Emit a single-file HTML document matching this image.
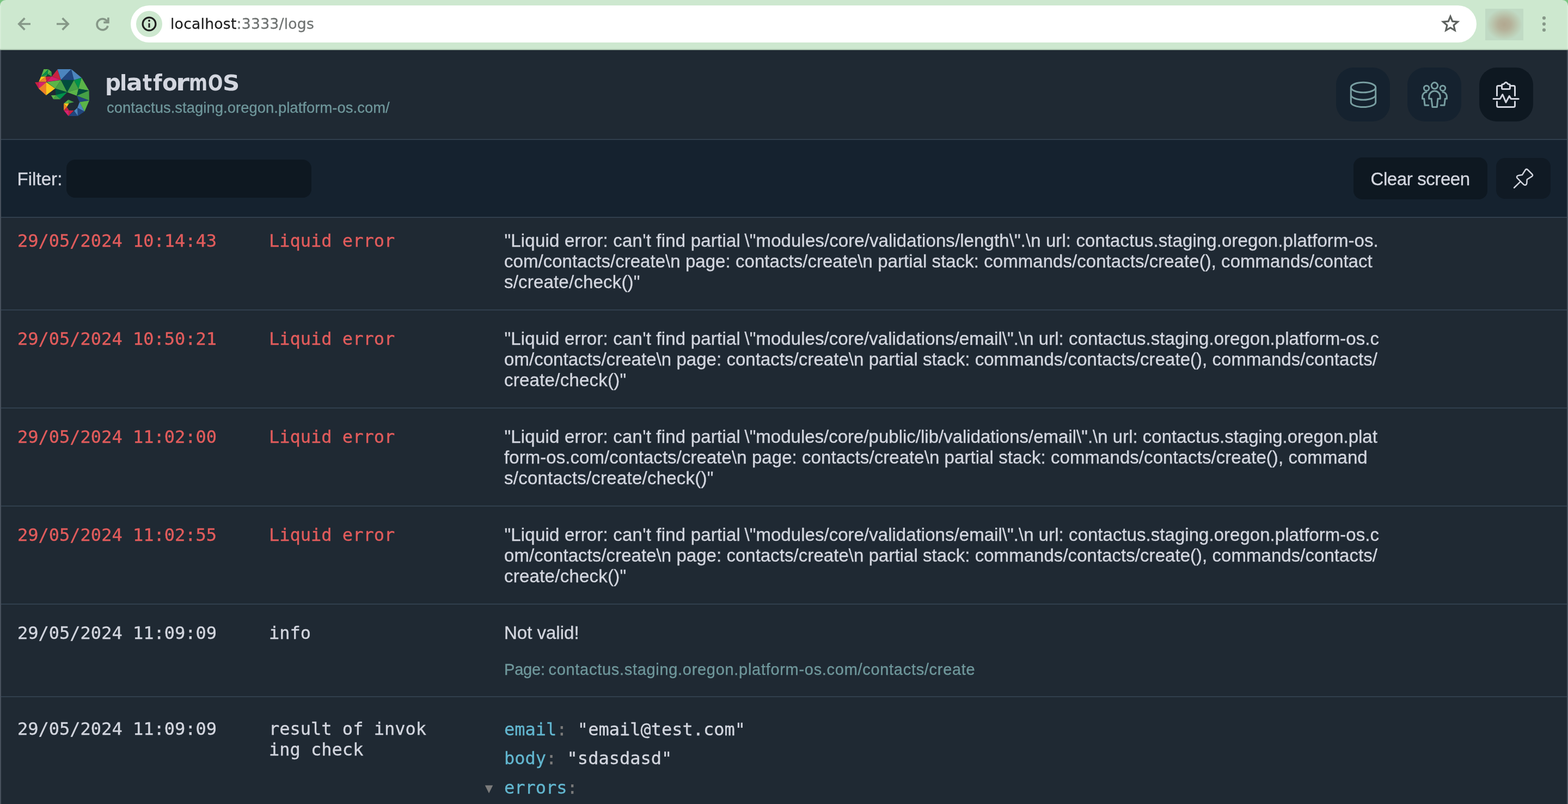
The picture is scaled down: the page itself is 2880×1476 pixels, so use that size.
<!DOCTYPE html>
<html lang="en"><head><meta charset="utf-8"><title>platformOS - Logs</title>
<style>
*{margin:0;padding:0;box-sizing:border-box}
html,body{width:2880px;height:1476px;overflow:hidden;background:#1f2933}
body{position:relative;font-family:"Liberation Sans", Arial, sans-serif;font-size:32px;color:#d3d6df}
#root{position:absolute;left:0;top:0;width:2880px;height:1476px;overflow:hidden;will-change:transform}
.t{position:absolute;white-space:pre;line-height:38px;height:38px;-webkit-text-stroke:.35px currentColor}
.m{font-size:33px}
.mono{font-family:"DejaVu Sans Mono", "Liberation Mono", monospace;font-size:32px}
.red{color:#e25c5c}
.teal{color:#6f979b}
.key{color:#62b6cf}
.dim{color:#7b7b7b}
.tri{font-family:"DejaVu Sans",sans-serif;font-size:19px;-webkit-text-stroke:0}
.hr{position:absolute;left:0;width:2880px;height:2px;background:#313f4d}
#chrome{position:absolute;left:0;top:0;width:2880px;height:92px;background:#cde8cf;border-bottom:2px solid #a9c2ac;overflow:hidden}
#chrome svg{position:absolute;left:0;top:0}
#pill{position:absolute;left:240px;top:10px;width:2472px;height:68px;border-radius:34px;background:#fff}
#info{position:absolute;left:250px;top:20px;width:48px;height:48px;border-radius:24px;background:#cde8cf}
#url{position:absolute;left:313px;top:24px;font-family:"DejaVu Sans","Liberation Sans",sans-serif;font-size:26.7px;line-height:40px;color:#6f7372;white-space:pre;letter-spacing:.2px;-webkit-text-stroke:.3px currentColor}
#url span{color:#1f1f1f}
#avatar{position:absolute;left:2728px;top:16px;width:70px;height:58px;background:radial-gradient(ellipse 33px 29px at 50% 50%,#b2a890 0%,#b5b199 35%,#bccbb3 75%,#c0dac4 100%)}
header{position:absolute;left:0;top:92px;width:2880px;height:163px;background:#1f2933}
#logo{position:absolute;left:56px;top:118px;width:120px;height:102px}
#brand{position:absolute;left:0;top:128.2px;height:48px;width:600px;font-family:"DejaVu Sans","Liberation Sans",sans-serif;font-weight:bold;font-size:42px;line-height:48px;white-space:pre;color:#d3d6df}
#brand span{position:absolute;top:0;transform-origin:0 38px}
#inst{position:absolute;left:196px;top:181.5px;font-size:27.4px;line-height:32px;white-space:pre;color:#6f979b;letter-spacing:.05px;-webkit-text-stroke:.3px #6f979b}
#filterbar{position:absolute;left:0;top:257px;width:2880px;height:141px;background:#15222f}
.hbtn{position:absolute;top:124px;width:99px;height:99px;border-radius:32px;background:#15222f}
.hbtn.on{background:#0e1821}
.hbtn svg{position:absolute;left:26px;top:26px;width:48px;height:48px;overflow:visible;fill:none;stroke:#789ea1;stroke-width:3;stroke-linecap:round;stroke-linejoin:round}
.hbtn.on svg{stroke:#d3d6df}
.fbtn{position:absolute;border-radius:16px;background:#0e1821}
#edgeL,#edgeR{position:absolute;top:92px;width:2px;height:1384px;background:#47505c}
#edgeL{left:0}#edgeR{left:2878px}
.cstrip{position:absolute;top:0;width:2px;height:90px;background:#d7edd8}
.corner{position:absolute;top:0;width:10px;height:10px}
</style></head>
<body>
<div id="root">
<div id="chrome"><div id="pill"></div><div id="info"></div><div id="avatar"></div><svg width="2880" height="92" viewBox="0 0 2880 92" fill="none" stroke="#869888" stroke-width="3.7" stroke-linecap="butt" stroke-linejoin="miter">
<path d="M56 44H36M45.4 33.4L34.8 44L45.4 54.6"/>
<path d="M104 44H124M114.600 33.4L125.200 44L114.600 54.6"/>
<path d="M197.5 40.7A10.1 10.1 0 1 0 198 47.4"/>
<path d="M198.9 32.3V41.2H190.3"/>
<circle cx="274" cy="44" r="11.9" stroke="#1f1f1f" stroke-width="3.2"/>
<path d="M274 42.6V50.6" stroke="#1f1f1f" stroke-width="3"/>
<circle cx="274" cy="38" r="1.9" fill="#1f1f1f" stroke="none"/>
<path d="M2664 30.2l3.75 8.95 9.7.85-7.35 6.35 2.2 9.45-8.3-5-8.3 5 2.2-9.45-7.35-6.35 9.7-.85z" stroke="#5e625f" stroke-width="3.2" stroke-linejoin="miter"/>
<g fill="#869888" stroke="none"><circle cx="2836" cy="33" r="3.1"/><circle cx="2836" cy="44" r="3.1"/><circle cx="2836" cy="55" r="3.1"/></g>
</svg><div id="url"><span>localhost</span>:3333/logs</div></div>
<header></header>
<svg id="logo" viewBox="0 0 1553 1320" preserveAspectRatio="none"><polygon fill="#5bb548" points="315,118 425,118 250,295"/><polygon fill="#00924a" points="425,118 410,235 250,295"/><polygon fill="#45a046" points="250,295 410,235 370,290"/><polygon fill="#004d3d" points="410,235 505,285 370,290"/><polygon fill="#5bb548" points="425,118 500,180 410,235"/><polygon fill="#45a046" points="500,180 505,285 410,235"/><polygon fill="#fcc81c" points="250,295 362,295 195,420"/><polygon fill="#ec8126" points="362,295 380,420 195,420"/><polygon fill="#c8203f" points="362,295 505,288 380,418"/><polygon fill="#d6206e" points="505,288 722,372 380,418"/><polygon fill="#c8233f" points="508,288 640,122 722,372"/><polygon fill="#c8203f" points="105,428 197,425 197,582"/><polygon fill="#d6206e" points="195,425 378,425 195,582"/><polygon fill="#ec8126" points="378,425 372,738 195,580"/><polygon fill="#fcc81c" points="376,425 585,577 370,738"/><polygon fill="#4c85be" points="640,118 970,118 725,372"/><polygon fill="#21467e" points="970,118 1035,376 725,372"/><polygon fill="#4c85be" points="970,118 1215,320 1035,376"/><polygon fill="#5bb548" points="385,420 722,375 590,577"/><polygon fill="#45a046" points="722,375 872,662 590,577"/><polygon fill="#004d3d" points="725,372 1035,376 872,662"/><polygon fill="#45a046" points="1035,376 1142,582 872,662"/><polygon fill="#00924a" points="1035,376 1215,320 1142,582"/><polygon fill="#5bb548" points="1215,320 1392,626 1142,582"/><polygon fill="#5bb548" points="872,662 1142,582 1100,748"/><polygon fill="#004d3d" points="1142,582 1392,626 1100,748"/><polygon fill="#45a046" points="1392,626 1397,862 1100,748"/><polygon fill="#004d3d" points="590,580 872,662 600,732"/><polygon fill="#00924a" points="872,662 710,828 600,732"/><polygon fill="#5bb548" points="490,738 607,735 545,830"/><polygon fill="#45a046" points="607,735 712,830 545,830"/><polygon fill="#21467e" points="1100,750 1397,862 1165,900"/><polygon fill="#5bb548" points="1165,900 1397,862 1285,1122"/><polygon fill="#4c85be" points="1165,900 1285,1122 1115,1035"/><polygon fill="#21467e" points="1115,1035 1285,1122 1125,1228"/><polygon fill="#4c85be" points="1115,1035 1125,1228 1035,1105"/><polygon fill="#21467e" points="1035,1105 1125,1228 900,1230"/><polygon fill="#c8203f" points="1035,1098 900,1230 915,1098"/><polygon fill="#d6206e" points="793,1098 915,1098 900,1230"/><polygon fill="#c8203f" points="793,1097 865,1015 917,1097"/><polygon fill="#ec8126" points="790,932 865,1015 790,1097"/><polygon fill="#fcc81c" points="790,930 915,930 865,1012"/><polygon fill="#5bb548" points="793,927 900,840 915,930"/><polygon fill="#45a046" points="900,840 1035,900 915,930"/></svg>
<div id="brand"><span style="left:192.54px;transform:scale(0.967,1.0)">p</span><span style="left:219.92px;transform:scale(0.916,0.927)">l</span><span style="left:232.47px;transform:scale(1.047,1.0)">a</span><span style="left:262.28px;transform:scale(0.860,0.97)">t</span><span style="left:281.22px;transform:scale(0.912,0.954)">f</span><span style="left:298.15px;transform:scale(0.964,1.0)">o</span><span style="left:322.62px;transform:scale(1.205,1.0)">r</span><span style="left:347.33px;transform:scale(0.779,1.0)">m</span><span style="left:381.89px;transform:scale(0.768,0.914)">O</span><span style="left:408.63px;transform:scale(1.034,0.914)">S</span></div>
<div id="inst">contactus.staging.oregon.platform-os.com/</div>
<div class="hbtn" style="left:2454px"><svg viewBox="0 0 48 48"><ellipse cx="24" cy="10.5" rx="22.7" ry="9.2"/><path d="M1.3 10.5V37.4A22.7 9.2 0 0 0 46.7 37.4V10.5"/><path d="M1.3 24A22.7 9.2 0 0 0 46.7 24"/></svg></div>
<div class="hbtn" style="left:2585px"><svg viewBox="0 0 48 48"><circle cx="24" cy="7.3" r="5.7"/><circle cx="9.07" cy="11.9" r="4.7"/><circle cx="38.93" cy="11.9" r="4.7"/><path d="M13.7 31.2V27.4A10.3 10.3 0 0 1 34.3 27.4V31.2H29.9L28.4 46.4H19.9L18.100 31.2Z"/><path d="M9.07 18.9A7.5 8.5 0 0 0 1.6 27.4V31.2H4.7L6 43.3H12.7"/><path d="M38.93 18.9A7.5 8.5 0 0 1 46.4 27.4V31.2H43.3L42 43.3H35.3"/></svg></div>
<div class="hbtn on" style="left:2717px"><svg viewBox="0 0 48 48"><path d="M14 7.5H9A2.5 2.5 0 0 0 6.5 10V25.5"/><path d="M32 7.5H37A2.5 2.5 0 0 1 39.5 10V25.5"/><path d="M6.5 36.6V43.9A2.500 2.500 0 0 0 9 46.4H37A2.500 2.500 0 0 0 39.5 43.9V36.6"/><path d="M15.5 11.9V6.5Q15.5 5 17 4.800L18.900 4.400L21.500 1.900Q23 .6 24.500 1.900L27.100 4.400L29 4.800Q30.400 5 30.400 6.500V11.900Q30.400 13.400 28.900 13.400H17Q15.500 13.400 15.500 11.900Z"/><path d="M0 31.500H12.200L16.800 23.500L23 37.900L29.200 26.300L32.300 31.500H46.200"/></svg></div>
<div class="hr" style="top:255px"></div>
<div id="filterbar"></div>
<div class="t m" style="left:32px;top:310px;left:31.5px;letter-spacing:.05px">Filter:</div>
<div class="fbtn" style="left:122px;top:293px;width:450px;height:70px"></div>
<div class="fbtn" style="left:2486px;top:289px;width:246px;height:77px"></div>
<div class="t m" style="left:2517.5px;top:310px;letter-spacing:-.4px">Clear screen</div>
<div class="fbtn" style="left:2748px;top:290px;width:100px;height:75px;background:#101a24"><svg viewBox="0 0 100 75" style="position:absolute;left:0;top:0;width:100px;height:75px;fill:none;stroke:#d3d6df;stroke-width:2.5;stroke-linecap:round;stroke-linejoin:round"><path d="M33 54.750L44.850 43.150"/><path d="M47.900 31.050L54 21.500Q55.900 19.700 57.800 21.500L66.300 30Q68 32 66 33.600L56.700 39.550L56.300 46.500Q55.500 50 52.800 49.850Q51.500 49.700 50.500 48.700L39 37.200Q37.200 35 38.600 33.400Q39.500 32.300 41.500 32Z"/></svg></div>
<div class="hr" style="top:398px"></div>
<div class="hr" style="top:568px"></div>
<div class="hr" style="top:748px"></div>
<div class="hr" style="top:928px"></div>
<div class="hr" style="top:1108px"></div>
<div class="hr" style="top:1278px"></div>
<div class="t mono red" style="left:32px;top:423px;">29/05/2024 10:14:43</div>
<div class="t mono red" style="left:494px;top:423px;">Liquid error</div>
<div class="t m" style="left:926.39px;top:423px;letter-spacing:0.1987px">"Liquid error: can't find partial </div>
<div class="t m" style="left:1367.49px;top:423px;letter-spacing:0.0905px">\"modules/core/validations/length\".\n url: contactus.staging.oregon.platform-os.</div>
<div class="t m" style="left:926px;top:461px;letter-spacing:0.0433px">com/contacts/create\n page: contacts/create\n partial stack: commands/contacts/create(), commands/contact</div>
<div class="t m" style="left:926px;top:499px;letter-spacing:0.1875px">s/create/check()"</div>
<div class="t mono red" style="left:32px;top:603px;">29/05/2024 10:50:21</div>
<div class="t mono red" style="left:494px;top:603px;">Liquid error</div>
<div class="t m" style="left:926.39px;top:603px;letter-spacing:0.1987px">"Liquid error: can't find partial </div>
<div class="t m" style="left:1367.49px;top:603px;letter-spacing:0.0378px">\"modules/core/validations/email\".\n url: contactus.staging.oregon.platform-os.c</div>
<div class="t m" style="left:926px;top:641px;letter-spacing:0.0428px">om/contacts/create\n page: contacts/create\n partial stack: commands/contacts/create(), commands/contacts/</div>
<div class="t m" style="left:926px;top:679px;letter-spacing:0.25px">create/check()"</div>
<div class="t mono red" style="left:32px;top:783px;">29/05/2024 11:02:00</div>
<div class="t mono red" style="left:494px;top:783px;">Liquid error</div>
<div class="t m" style="left:926.39px;top:783px;letter-spacing:0.1987px">"Liquid error: can't find partial </div>
<div class="t m" style="left:1367.49px;top:783px;letter-spacing:-0.0022px">\"modules/core/public/lib/validations/email\".\n url: contactus.staging.oregon.plat</div>
<div class="t m" style="left:926px;top:821px;letter-spacing:0.063px">form-os.com/contacts/create\n page: contacts/create\n partial stack: commands/contacts/create(), command</div>
<div class="t m" style="left:926px;top:859px;letter-spacing:0.24px">s/contacts/create/check()"</div>
<div class="t mono red" style="left:32px;top:963px;">29/05/2024 11:02:55</div>
<div class="t mono red" style="left:494px;top:963px;">Liquid error</div>
<div class="t m" style="left:926.39px;top:963px;letter-spacing:0.1987px">"Liquid error: can't find partial </div>
<div class="t m" style="left:1367.49px;top:963px;letter-spacing:0.0378px">\"modules/core/validations/email\".\n url: contactus.staging.oregon.platform-os.c</div>
<div class="t m" style="left:926px;top:1001px;letter-spacing:0.0428px">om/contacts/create\n page: contacts/create\n partial stack: commands/contacts/create(), commands/contacts/</div>
<div class="t m" style="left:926px;top:1039px;letter-spacing:0.25px">create/check()"</div>
<div class="t mono" style="left:32px;top:1142.7px;">29/05/2024 11:09:09</div>
<div class="t mono" style="left:494px;top:1142.7px;">info</div>
<div class="t m" style="left:926px;top:1142.6px;letter-spacing:0px">Not valid!</div>
<div class="t teal" style="left:926px;top:1210px;font-size:29px;letter-spacing:-.2px">Page: </div>
<div class="t teal" style="left:1007.5px;top:1210px;font-size:29px;letter-spacing:.7px">contactus.staging.oregon.platform-os.com/contacts/create</div>
<div class="t mono" style="left:32px;top:1319.4px;">29/05/2024 11:09:09</div>
<div class="t mono" style="left:494px;top:1319.4px;">result of invok</div>
<div class="t mono" style="left:494px;top:1357.3px;">ing check</div>
<div class="t mono" style="left:926px;top:1319.5px;"><span class="key">email</span><span class="dim">:</span> "email@test.com"</div>
<div class="t mono" style="left:926px;top:1373.4px;"><span class="key">body</span><span class="dim">:</span> "sdasdasd"</div>
<div class="t mono" style="left:926px;top:1427.3px;"><span class="key">errors</span><span class="dim">:</span></div>
<div class="t dim tri" style="left:890.7px;top:1427.5px;">▼</div>
<div id="edgeL"></div><div id="edgeR"></div>
<div class="cstrip" style="left:0"></div><div class="cstrip" style="left:2878px"></div><div class="corner" style="left:0;background:radial-gradient(circle at 100% 100%,transparent 9px,#78c480 10.5px)"></div><div class="corner" style="left:2870px;background:radial-gradient(circle at 0 100%,transparent 9px,#78c480 10.5px)"></div>
</div>
<script>(function(){var w=window.innerWidth||0;if(w>0&&Math.abs(w-2880)>2){document.documentElement.style.zoom=w/2880;}})();</script>
</body></html>
